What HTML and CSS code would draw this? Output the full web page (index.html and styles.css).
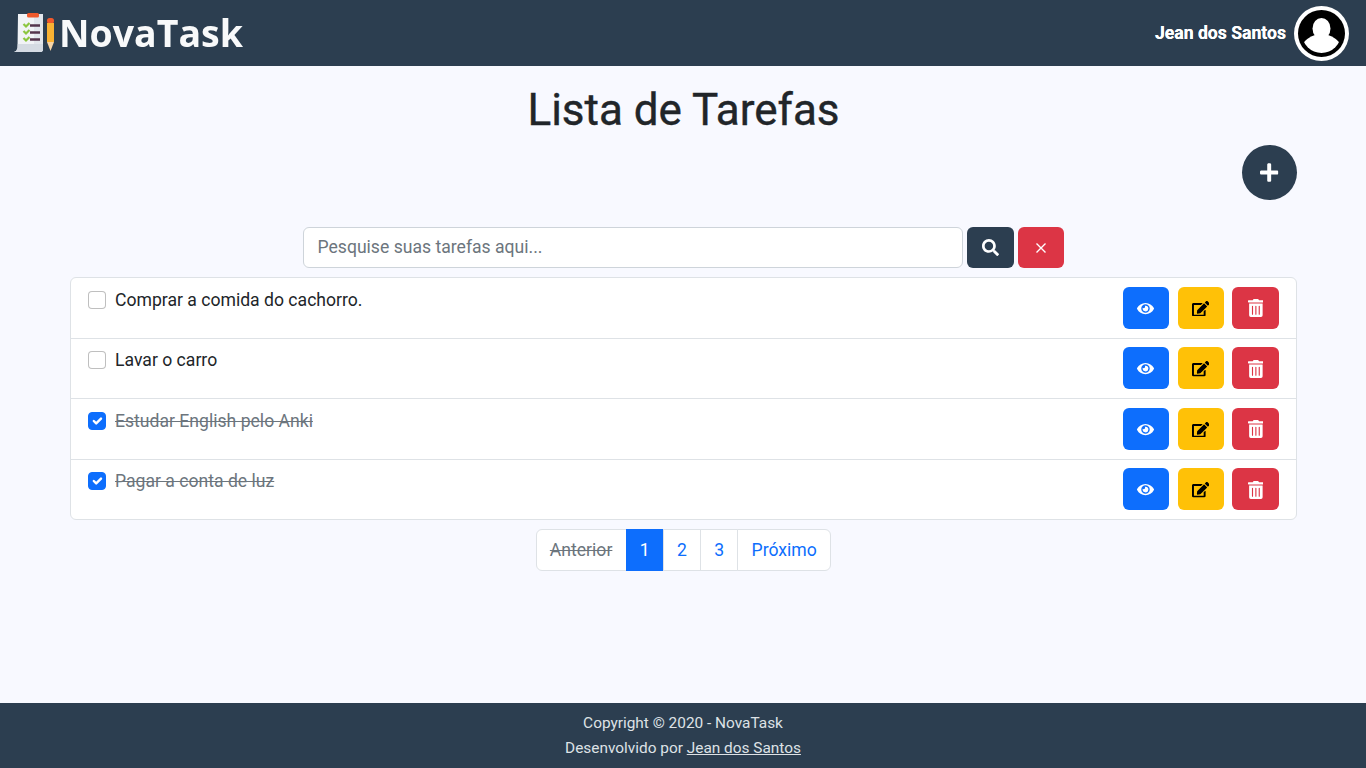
FILE: index.html
```html
<!DOCTYPE html>
<html lang="pt-BR">
<head>
    <meta charset="UTF-8">
    <meta name="viewport" content="width=device-width, initial-scale=1.0">
    <title>NovaTask</title>
    <link rel="stylesheet" href="styles.css">
</head>
<body>
    <svg class="icon-defs" aria-hidden="true">
        <symbol id="i-search" viewBox="0 0 512 512"><path d="M505 442.7L405.3 343c-4.5-4.5-10.6-7-17-7H372c27.6-35.3 44-79.7 44-128C416 93.1 322.9 0 208 0S0 93.1 0 208s93.1 208 208 208c48.3 0 92.7-16.4 128-44v16.3c0 6.4 2.5 12.5 7 17l99.7 99.7c9.4 9.4 24.6 9.4 33.9 0l28.3-28.3c9.4-9.4 9.4-24.6.1-34zM208 336c-70.7 0-128-57.2-128-128 0-70.7 57.2-128 128-128 70.7 0 128 57.2 128 128 0 70.7-57.2 128-128 128z"/></symbol>
        <symbol id="i-plus" viewBox="0 0 448 512"><path d="M416 208H272V64c0-17.67-14.33-32-32-32h-32c-17.67 0-32 14.33-32 32v144H32c-17.67 0-32 14.33-32 32v32c0 17.67 14.33 32 32 32h144v144c0 17.67 14.33 32 32 32h32c17.67 0 32-14.33 32-32V304h144c17.67 0 32-14.33 32-32v-32c0-17.67-14.33-32-32-32z"/></symbol>
        <symbol id="i-eye" viewBox="0 0 576 512"><path d="M572.52 241.4C518.29 135.59 410.93 64 288 64S57.68 135.64 3.48 241.41a32.35 32.35 0 0 0 0 29.19C57.71 376.41 165.07 448 288 448s230.32-71.64 284.52-177.41a32.35 32.35 0 0 0 0-29.19zM288 400a144 144 0 1 1 144-144 143.93 143.93 0 0 1-144 144zm0-240a95.31 95.31 0 0 0-25.31 3.79 47.85 47.85 0 0 1-66.9 66.9A95.78 95.78 0 1 0 288 160z"/></symbol>
        <symbol id="i-edit" viewBox="0 0 576 512"><path d="M402.6 83.2l90.2 90.2c3.8 3.8 3.8 10 0 13.8L274.4 405.6l-92.8 10.3c-12.4 1.4-22.9-9.1-21.5-21.5l10.3-92.8L388.8 83.2c3.8-3.8 10-3.8 13.8 0zm162-22.9l-48.8-48.8c-15.2-15.2-39.9-15.2-55.2 0l-35.4 35.4c-3.8 3.8-3.8 10 0 13.8l90.2 90.2c3.8 3.8 10 3.8 13.8 0l35.4-35.4c15.2-15.3 15.2-40 0-55.2zM384 346.2V448H64V128h229.8c3.2 0 6.2-1.3 8.5-3.5l40-40c7.6-7.6 2.2-20.5-8.5-20.5H48C21.5 64 0 85.5 0 112v352c0 26.5 21.5 48 48 48h352c26.5 0 48-21.5 48-48V306.2c0-10.7-12.9-16-20.5-8.5l-40 40c-2.2 2.3-3.5 5.3-3.5 8.5z"/></symbol>
        <symbol id="i-trash" viewBox="0 0 448 512"><path d="M32 464a48 48 0 0 0 48 48h288a48 48 0 0 0 48-48V128H32zm272-256a16 16 0 0 1 32 0v224a16 16 0 0 1-32 0zm-96 0a16 16 0 0 1 32 0v224a16 16 0 0 1-32 0zm-96 0a16 16 0 0 1 32 0v224a16 16 0 0 1-32 0zM432 32H312l-9.4-18.7A24 24 0 0 0 281.1 0H166.8a23.72 23.72 0 0 0-21.4 13.3L136 32H16A16 16 0 0 0 0 48v32a16 16 0 0 0 16 16h416a16 16 0 0 0 16-16V48a16 16 0 0 0-16-16z"/></symbol>
    </svg>

    <header class="topbar">
        <a class="brand" href="#">
            <svg class="brand-icon" viewBox="0 0 40 40" aria-hidden="true">
                <path d="M4 1h25v35q0 3 -3 3H0q3 -1 3.500 -4z" fill="#f1f3f6"/>
                <path d="M20 1h9v35q0 3 -3 3h-6z" fill="#e2e6ec"/>
                <path d="M3.800 31h25.200v5q0 3 -3 3H0q3 -1 3.500 -4z" fill="#d5dbe3"/>
                <rect x="13" y="0" width="12" height="4.500" rx="1.500" fill="#f0592b"/>
                <path d="M9.500 11l2.500 2.500 3.500 -3.500M9.500 18l2.500 2.500 3.500 -3.500M9.500 25l2.500 2.500 3.500 -3.500" fill="none" stroke="#8cc63f" stroke-width="2.200"/>
                <path d="M16 12.500h10M16 19.500h10M16 26.500h10" stroke="#54344c" stroke-width="2.600"/>
                <rect x="33" y="5" width="7" height="5.500" rx="2.500" fill="#f0592b"/>
                <rect x="33" y="10" width="7" height="19" fill="#f9b233"/>
                <path d="M33 29h7l-3.500 9z" fill="#f6d5a8"/>
            </svg>
            <span class="brand-name">NovaTask</span>
        </a>
        <div class="user">
            <span class="user-name">Jean dos Santos</span>
            <svg class="avatar" viewBox="0 0 55 55" aria-hidden="true">
                <circle cx="27.500" cy="27.500" r="27.500" fill="#fff"/>
                <circle cx="27.500" cy="27.500" r="23.500" fill="#000"/>
                <clipPath id="avatar-clip"><circle cx="27.500" cy="27.500" r="19.500"/></clipPath>
                <g fill="#fff" clip-path="url(#avatar-clip)">
                    <ellipse cx="27.500" cy="22.500" rx="9" ry="10.500"/>
                    <path d="M21 29q-9 3 -14 11v10h41v-10q-5 -8 -14 -11z"/>
                </g>
            </svg>
        </div>
    </header>

    <main class="content">
        <h1>Lista de Tarefas</h1>
        <div class="add-row">
            <a class="btn-add" href="#" aria-label="Nova tarefa"><svg class="icon icon-plus"><use href="#i-plus"/></svg></a>
        </div>

        <form class="search">
            <input type="text" placeholder="Pesquise suas tarefas aqui...">
            <button type="button" class="btn btn-dark"><svg class="icon icon-search"><use href="#i-search"/></svg></button>
            <button type="button" class="btn btn-red btn-clear">
                <svg class="icon-x" viewBox="0 0 12 12"><path d="M1.500 1.500l9 9M10.500 1.500l-9 9"/></svg>
            </button>
        </form>

        <ul class="task-list">
            <li class="task">
                <label class="task-label"><input type="checkbox"> Comprar a comida do cachorro.</label>
                <div class="task-actions">
                    <a class="btn btn-blue" href="#"><svg class="icon icon-eye"><use href="#i-eye"/></svg></a>
                    <a class="btn btn-yellow" href="#"><svg class="icon icon-edit"><use href="#i-edit"/></svg></a>
                    <a class="btn btn-red" href="#"><svg class="icon icon-trash"><use href="#i-trash"/></svg></a>
                </div>
            </li>
            <li class="task">
                <label class="task-label"><input type="checkbox"> Lavar o carro</label>
                <div class="task-actions">
                    <a class="btn btn-blue" href="#"><svg class="icon icon-eye"><use href="#i-eye"/></svg></a>
                    <a class="btn btn-yellow" href="#"><svg class="icon icon-edit"><use href="#i-edit"/></svg></a>
                    <a class="btn btn-red" href="#"><svg class="icon icon-trash"><use href="#i-trash"/></svg></a>
                </div>
            </li>
            <li class="task done">
                <label class="task-label"><input type="checkbox" checked> Estudar English pelo Anki</label>
                <div class="task-actions">
                    <a class="btn btn-blue" href="#"><svg class="icon icon-eye"><use href="#i-eye"/></svg></a>
                    <a class="btn btn-yellow" href="#"><svg class="icon icon-edit"><use href="#i-edit"/></svg></a>
                    <a class="btn btn-red" href="#"><svg class="icon icon-trash"><use href="#i-trash"/></svg></a>
                </div>
            </li>
            <li class="task done">
                <label class="task-label"><input type="checkbox" checked> Pagar a conta de luz</label>
                <div class="task-actions">
                    <a class="btn btn-blue" href="#"><svg class="icon icon-eye"><use href="#i-eye"/></svg></a>
                    <a class="btn btn-yellow" href="#"><svg class="icon icon-edit"><use href="#i-edit"/></svg></a>
                    <a class="btn btn-red" href="#"><svg class="icon icon-trash"><use href="#i-trash"/></svg></a>
                </div>
            </li>
        </ul>

        <nav class="pagination">
            <a class="page disabled" href="#">Anterior</a>
            <a class="page active" href="#">1</a>
            <a class="page" href="#">2</a>
            <a class="page" href="#">3</a>
            <a class="page" href="#">Próximo</a>
        </nav>
    </main>

    <footer class="footer">
        <p>Copyright © 2020 - NovaTask</p>
        <p>Desenvolvido por <a href="#">Jean dos Santos</a></p>
    </footer>
</body>
</html>
```

FILE: styles.css
```css
* {
    box-sizing: border-box;
}

body {
    display: flex;
    flex-direction: column;
    min-height: 768px;
    margin: 0;
    background: #f8f9ff;
    font-family: Roboto, "Liberation Sans", sans-serif;
    font-size: 16px;
    line-height: 1.5;
    color: #212529;
}

.icon-defs {
    display: none;
}

.icon {
    display: block;
    fill: currentColor;
}

.icon-plus {
    width: 18.400px;
    height: 21px;
}

.icon-search {
    width: 17px;
    height: 17px;
}

.icon-eye {
    width: 17px;
    height: 15.100px;
    margin-right: 1px;
}

.icon-edit {
    width: 17.500px;
    height: 15.600px;
}

.icon-trash {
    width: 15.750px;
    height: 18px;
}

.topbar {
    display: flex;
    align-items: center;
    justify-content: space-between;
    height: 66px;
    padding: 0 17px 0 14px;
    background: #2c3e50;
}

.brand {
    display: flex;
    align-items: center;
    text-decoration: none;
    color: #f8f9fa;
    filter: blur(0.4px);
}

.brand-icon {
    width: 40px;
    height: 40px;
    margin-right: 5px;
}

.brand-name {
    font-family: "Open Sans", sans-serif;
    font-size: 37.500px;
    font-weight: 700;
    line-height: 40px;
}

.user {
    display: flex;
    align-items: center;
    gap: 8px;
}

.user-name {
    margin-top: 1px;
    font-size: 17.600px;
    font-weight: 700;
    color: #fff;
    text-shadow: 0 0 0.500px #fff;
}

.avatar {
    width: 55px;
    height: 55px;
}

.content {
    flex: 1;
    padding: 0 69px 0 70px;
}

h1 {
    margin: 17px 0 8px;
    font-size: 44px;
    font-weight: 400;
    line-height: 54px;
    text-align: center;
    -webkit-text-stroke: 0.4px #212529;
}

.add-row {
    display: flex;
    justify-content: flex-end;
    margin-bottom: 27px;
}

.btn-add {
    display: flex;
    align-items: center;
    justify-content: center;
    width: 55px;
    height: 55px;
    border-radius: 50%;
    background: #2c3e50;
    color: #fff;
}

.search {
    display: flex;
    gap: 4px;
    width: 761px;
    height: 41px;
    margin: 0 auto 9px;
}

.search input {
    width: 660px;
    padding: 6px 13.500px;
    border: 1px solid #ced4da;
    border-radius: 6px;
    background: #fff;
    font: inherit;
    font-size: 17.600px;
}

.search input::placeholder {
    color: #6c757d;
}

.btn {
    display: flex;
    align-items: center;
    justify-content: center;
    width: 46px;
    border: 0;
    border-radius: 6px;
    padding: 0;
}

.search .btn {
    width: 47px;
}

.search .btn-clear {
    width: 46px;
}

.btn-dark {
    background: #2c3e50;
    color: #fff;
}

.btn-red {
    background: #dc3545;
    color: #fff;
}

.btn-blue {
    background: #0d6efd;
    color: #fff;
}

.btn-yellow {
    background: #ffc107;
    color: #000;
}

.icon-x {
    width: 12px;
    height: 12px;
    fill: none;
    stroke: #fff;
    stroke-width: 1.400;
}

.task-list {
    margin: 0 0 8.500px;
    padding: 0;
    list-style: none;
    background: #fff;
    border: 1px solid #dee2e6;
    border-radius: 6px;
}

.task {
    display: flex;
    justify-content: space-between;
    height: 60.500px;
    padding: 8.700px 17px 8px;
    border-bottom: 1px solid #dee2e6;
}

.task:last-child {
    border-bottom: 0;
    height: 59.500px;
}

.task-label {
    display: flex;
    gap: 9px;
    font-size: 17.600px;
    line-height: 26px;
}

.task-label input {
    appearance: none;
    width: 18px;
    height: 18px;
    margin: 4px 0 0;
    border: 1px solid rgba(0, 0, 0, 0.25);
    border-radius: 4px;
    background: #fff;
}

.task-label input:checked {
    border-color: #0d6efd;
    background: #0d6efd url("data:image/svg+xml,%3csvg xmlns='http://www.w3.org/2000/svg' viewBox='0 0 20 20'%3e%3cpath fill='none' stroke='%23fff' stroke-linecap='round' stroke-linejoin='round' stroke-width='3' d='M6 10l3 3l6-6'/%3e%3c/svg%3e") center / contain no-repeat;
}

.done .task-label {
    color: #6c757d;
    text-decoration: line-through;
}

.task-actions {
    display: flex;
    gap: 8.500px;
    height: 42px;
}

.task-actions .btn {
    padding-top: 1.500px;
}

.task-actions .btn:last-child {
    width: 47px;
}

.pagination {
    display: flex;
    justify-content: center;
    height: 42px;
    padding-left: 1px;
}

.page {
    display: flex;
    align-items: center;
    padding: 1px 13.200px 0;
    border: 1px solid #dee2e6;
    margin-left: -1px;
    background: #fff;
    font-size: 17.600px;
    color: #0d6efd;
    text-decoration: none;
}

.page:first-child {
    padding-left: 12.800px;
    border-radius: 6px 0 0 6px;
}

.page:last-child {
    border-radius: 0 6px 6px 0;
}

.page.active {
    border-color: #0d6efd;
    background: #0d6efd;
    color: #fff;
}

.page.disabled {
    color: #6c757d;
    text-decoration: line-through;
}

.footer {
    height: 65px;
    padding-top: 6px;
    background: #2c3e50;
    color: #dee2e6;
    font-size: 15.400px;
    text-align: center;
}

.footer p {
    margin: 0;
    line-height: 28px;
}

.footer p + p {
    margin-top: -3px;
}

.footer a {
    color: #dee2e6;
}
```
